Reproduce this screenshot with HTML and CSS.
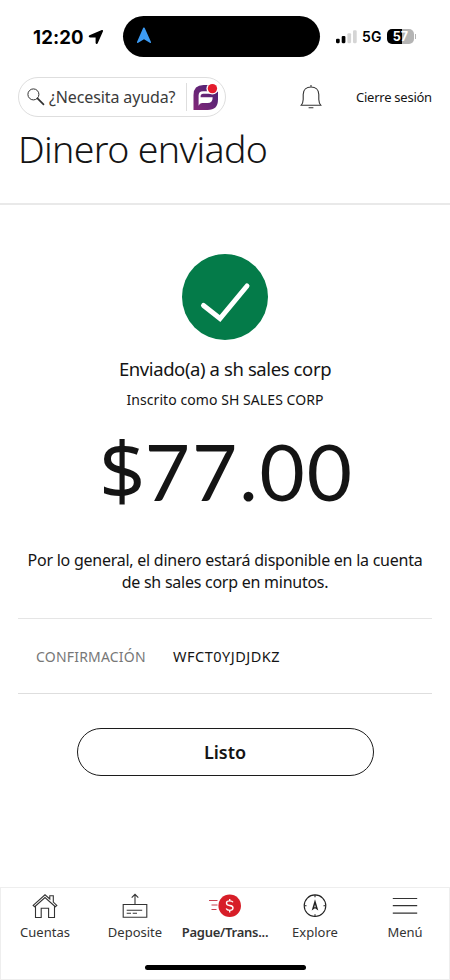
FILE: index.html
```html
<!DOCTYPE html>
<html lang="es">
<head>
<meta charset="utf-8">
<meta name="viewport" content="width=device-width, initial-scale=1">
<title>Dinero enviado</title>
<link rel="stylesheet" href="styles.css">
</head>
<body>
<div class="screen">
  <div class="status">
    <span class="clock">12:20</span>
    <svg class="location" width="16" height="16" viewBox="0 0 16 16"><path d="M1.5 6.3 13.8 1.1Q15.3.8 15 2.3L9.7 14.2Q8.3 16 7.6 14V8.5H2Q-.3 7.7 1.5 6.3Z" fill="#000"/></svg>
    <div class="island">
      <svg width="16" height="17" viewBox="0 0 16 17"><path d="M7.2.8Q8 0 8.6.8L15 15Q15.2 16.4 13.8 15.7L8 12.2 2.2 15.7Q.8 16.4 1 15Z" fill="#3c9bf4"/></svg>
    </div>
    <svg class="signal" width="21" height="14" viewBox="0 0 21 14"><rect y="8.7" width="3.7" height="4.5" rx="1.1"/><rect x="5.7" y="6" width="3.7" height="7.2" rx="1.1"/><rect x="11.4" y="3.2" width="3.7" height="10" rx="1.1" fill="#d5d5d5"/><rect x="17" y=".3" width="3.7" height="12.9" rx="1.1" fill="#d5d5d5"/></svg>
    <span class="network">5G</span>
    <div class="battery"><span>57</span></div>
    <i class="battery-tip"></i>
  </div>

  <header class="tools">
    <div class="help">
      <svg class="search" width="18" height="18" viewBox="0 0 18 18" fill="none" stroke="#333"><circle cx="6.4" cy="6.4" r="5.5"/><path d="m10.5 10.3 6 6" stroke-width="1.7" stroke-linecap="round"/></svg>
      <span class="help-text">¿Necesita ayuda?</span>
      <svg class="assistant" width="26" height="28" viewBox="0 0 26 28">
        <defs><linearGradient id="purple" x1="0" y1="1" x2="1" y2="0"><stop stop-color="#842779"/><stop offset="1" stop-color="#462273"/></linearGradient></defs>
        <path d="M.5 27V12Q.5 2 10.5 2H17L25 9V16.5Q25 27 14.5 27Z" fill="url(#purple)"/>
        <path d="M5.6 14.2V12.6Q5.6 8.2 10 8.2H16L19.5 10.8H10.2Q7.6 10.8 7.6 13.4V14.2H19.6V15Q19.6 20 14.6 20H9Q6.6 20 5.6 22.8Z" fill="#fff"/>
        <circle cx="19.4" cy="5.6" r="6" fill="#fff"/><circle cx="19.4" cy="5.6" r="4.7" fill="#e41c2d"/>
      </svg>
    </div>
    <svg class="bell" width="22" height="26" viewBox="0 0 22 26" fill="none" stroke="#333" stroke-width="1.1"><path d="M11 1V3M1.3 21.2Q3 19.2 3.2 15.5V10.4C3.2 5.5 6.6 3 11 3S18.8 5.5 18.8 10.4V15.5Q19 19.2 20.7 21.2ZM8.6 23.8H13.4"/></svg>
    <a class="signout">Cierre sesión</a>
  </header>

  <h1>Dinero enviado</h1>

  <main>
    <svg class="success" width="86" height="86" viewBox="0 0 86 86"><circle cx="43" cy="43" r="43" fill="#047b49"/><path d="m21.5 51.5 16.5 13 27-32.5" fill="none" stroke="#fff" stroke-width="5" stroke-linecap="round" stroke-linejoin="miter"/></svg>
    <p class="recipient">Enviado(a) a sh sales corp</p>
    <p class="registered">Inscrito como SH SALES CORP</p>
    <div class="amount"><span class="currency">$</span>77.00</div>
    <p class="timing">Por lo general, el dinero estará disponible en la cuenta<br>de sh sales corp en minutos.</p>
    <dl class="confirmation"><dt>CONFIRMACIÓN</dt><dd>WFCT0YJDJDKZ</dd></dl>
    <button class="done">Listo</button>
  </main>

  <footer>
    <nav>
      <a class="tab"><svg width="26" height="26" viewBox="0 0 26 26" fill="none" stroke="#333" stroke-width="1.1"><path d="M3.5 13.2V24.5H9.2V15.2H16.6V24.5H22.5V13.2M1.2 12.4 13 1.8 17.8 6V2.8H21.3V9.1L24.8 12.4 23.3 13.7 13 4.6 2.7 13.7Z"/></svg><span>Cuentas</span></a>
      <a class="tab"><svg width="26" height="26" viewBox="0 0 26 26" fill="none" stroke="#333" stroke-width="1.1"><path d="M1.2 11.5H24.8V24.3H1.2ZM13 11.5V1.3M9.7 4.7 13 1.3 16.3 4.7M4.7 17.3H20.2M4.7 20.3H9M10.7 20.3H15"/></svg><span>Deposite</span></a>
      <a class="tab active"><svg width="32" height="26" viewBox="0 0 32 26"><path d="M0 7.5H8.5M2.5 12H8.5M2.5 16.5H7.5" stroke="#c94250" stroke-width="1.2"/><circle cx="20.7" cy="12.7" r="11.3" fill="#d71e28"/><path d="M24 9.3Q23.2 7.8 20.7 7.8C16.4 7.8 16.4 12 20.7 12.5C25.3 13 25 17.3 20.7 17.3Q18 17.3 17.2 15.5M20.7 5.9V7.8M20.7 17.3V19.4" stroke="#fff" stroke-width="1.35" fill="none"/></svg><span>Pague/Trans...</span></a>
      <a class="tab"><svg width="26" height="26" viewBox="0 0 26 26"><g fill="none" stroke="#222" stroke-width="1.1"><circle cx="13" cy="12.7" r="10.8"/><path d="M13 2V4.2M13 21.2V23.4M2.3 12.7H4.5M21.5 12.7H23.7"/></g><path d="M13 6.3 16.3 17.4 13 15.2 9.7 17.4Z" fill="#222"/><path d="m13 11.5.8 3-.8-.5-.8.5Z" fill="#fff"/></svg><span>Explore</span></a>
      <a class="tab"><svg width="26" height="26" viewBox="0 0 26 26"><path d="M.8 5.5H25.2M.8 12.7H25.2M.8 20.2H25.2" stroke="#333" stroke-width="1.2"/></svg><span>Menú</span></a>
    </nav>
    <div class="home-indicator"></div>
  </footer>
</div>
</body>
</html>
```
FILE: styles.css
```css
* { box-sizing: border-box; }
body { margin: 0; background: #fff; color: #141414; font-family: "Noto Sans", sans-serif; }
h1, p, dl, dd { margin: 0; }
svg { display: block; flex: none; }
.screen { width: 450px; height: 980px; display: flex; flex-direction: column; overflow: hidden; }

.status { height: 73px; display: flex; align-items: center; padding-left: 33px; font-family: Inter, sans-serif; color: #000; }
.clock { width: 51px; font-size: 18.5px; font-weight: 700; letter-spacing: .15px; white-space: nowrap; }
.location { margin-left: 4px; }
.island { width: 197px; height: 41px; border-radius: 21px; background: #000; margin-left: 19px; padding: 11px 13px; }
.signal { margin-left: 16px; }
.network { width: 20px; margin-left: 5px; font-size: 14px; line-height: 20px; font-weight: 600; letter-spacing: .2px; }
.battery { width: 27px; height: 15px; margin-left: 5px; border-radius: 5px; background: linear-gradient(90deg, #000 57%, #b4b4b4 57%); color: #fff; font-size: 12.5px; line-height: 15px; font-weight: 700; text-align: center; }
.battery-tip { width: 1px; height: 5px; margin-left: 1px; background: #b4b4b4; }

.tools { height: 46px; display: flex; align-items: flex-start; padding: 4px 0 0 18px; }
.help { width: 208px; height: 40px; border: 1px solid #dedede; border-radius: 20px; display: flex; align-items: center; padding-left: 8px; }
.search { margin-top: -1px; }
.help-text { width: 133px; margin-left: 4px; color: #3b3b3b; font-size: 16px; letter-spacing: -.12px; white-space: nowrap; }
.assistant { box-sizing: content-box; margin-left: 4px; padding-left: 6px; border-left: 1px solid #dedede; }
.bell { margin: 7px 0 0 74px; }
.signout { margin: 10px 0 0 34px; font-size: 13px; line-height: 20px; letter-spacing: -.25px; white-space: nowrap; }

h1 { height: 86px; padding-left: 18px; border-bottom: 2px solid #e9e9e9; font-size: 37.5px; line-height: 60px; font-weight: 300; letter-spacing: -.65px; white-space: nowrap; }

main { height: 682px; display: flex; flex-direction: column; align-items: center; padding-top: 49px; }
.recipient { height: 30px; margin-top: 14px; font-size: 18.5px; line-height: 30px; letter-spacing: -.4px; white-space: nowrap; }
.registered { height: 20px; margin-top: 6px; font-size: 14px; line-height: 20px; letter-spacing: .07px; white-space: nowrap; }
.amount { height: 100px; margin-top: 11px; padding-left: 3px; display: flex; font-family: Lato, sans-serif; font-size: 78px; line-height: 100px; letter-spacing: 2px; white-space: nowrap; }
.currency { font-family: "Noto Sans", sans-serif; font-size: 81px; line-height: 96px; letter-spacing: -.5px; }
.timing { height: 44px; margin-top: 28px; text-align: center; font-size: 16px; line-height: 22px; letter-spacing: -.25px; white-space: nowrap; }
.confirmation { width: 414px; height: 76px; margin-top: 25px; padding: 0 18px; border-top: 1px solid #e5e5e5; border-bottom: 1px solid #dedede; display: flex; align-items: center; font-size: 14px; }
.confirmation dt { width: 137px; color: #777; letter-spacing: .2px; }
.confirmation dd { font-size: 14.5px; letter-spacing: .5px; }
.done { width: 297px; height: 48px; margin-top: 34px; border: 1px solid #1c1c1c; border-radius: 24px; background: #fff; color: #141414; font: 600 18px "Noto Sans", sans-serif; }

footer { height: 93px; border: 1px solid #eee; padding-top: 5px; }
nav { display: grid; grid-template-columns: repeat(5, 90px); width: 450px; margin-left: -1px; }
.tab { height: 72px; display: flex; flex-direction: column; align-items: center; font-size: 13px; line-height: 20px; color: #333; white-space: nowrap; }
.tab span { margin-top: 3px; }
.active { font-weight: 600; letter-spacing: -.25px; }
.home-indicator { width: 161px; height: 5px; border-radius: 3px; background: #000; margin: 0 auto; }
```
